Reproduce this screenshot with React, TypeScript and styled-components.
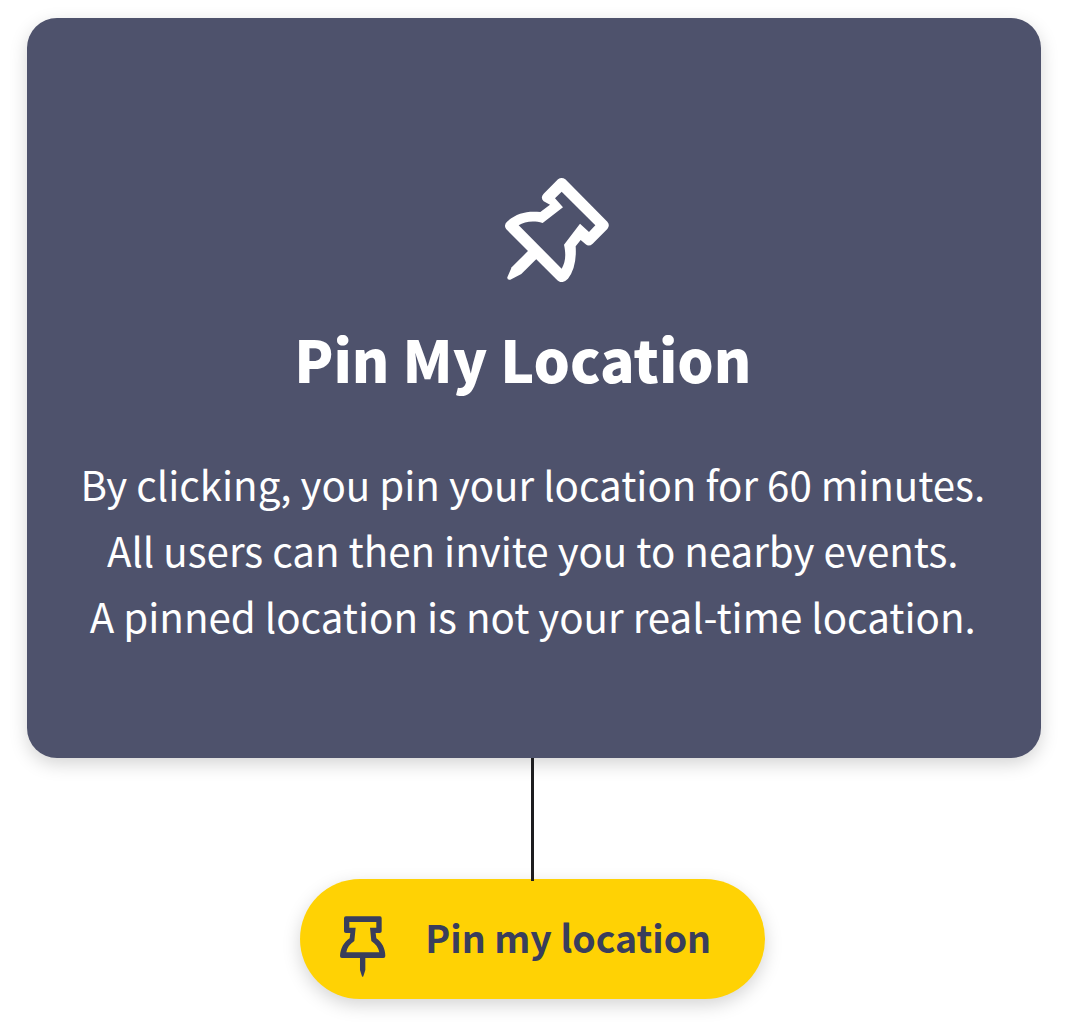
import React from 'react';
import styled, { createGlobalStyle } from 'styled-components';

const GlobalStyle = createGlobalStyle`
  * { box-sizing: border-box; }
  body { margin: 0; background: #fff; font-family: "Noto Sans CJK SC", sans-serif; }
`;
const Page = styled.main`
  width: 1068px; height: 1035px; padding: 18px 0 0 27px; overflow: hidden;
  display: flex; flex-direction: column; align-items: flex-start;
`;
const Card = styled.section`
  width: 1013.5px; height: 739.5px; border-radius: 30px; background: #4e526c; color: #fff;
  box-shadow: 0 6px 18px rgba(0,0,0,.17);
  display: flex; flex-direction: column; align-items: center; padding-top: 160px; flex: none;
`;
const CardPin = styled.svg`
  display: block; width: 104px; height: 104px; margin-left: 46px; fill: #fff; flex: none;
`;
const Title = styled.h1`
  margin: 28px 22px 0 0; font-size: 57.2px; line-height: 96px; font-weight: 900; white-space: nowrap;
`;
const Copy = styled.p`
  margin: 45px 2px 0 0; font-size: 40.28px; line-height: 66px; text-align: center; white-space: nowrap;
`;
const Connector = styled.div`
  width: 3px; height: 123px; margin: 0 0 -1.5px 504px; background: #1d1d1f; position: relative; z-index: 1; flex: none;
`;
const PinButton = styled.button`
  width: 465px; height: 120px; margin-left: 273px; border: 0; border-radius: 60px; background: #ffd204;
  color: #393e5c; box-shadow: 0 6px 18px rgba(0,0,0,.17); display: flex; align-items: center;
  padding: 0 0 0 40px; gap: 39.6px; white-space: nowrap; flex: none;
`;
const ButtonLabel = styled.span`
  font: 700 37.5px/60px "Noto Sans CJK SC", sans-serif; margin-bottom: 5px;
`;
const ButtonPin = styled.svg`
  width: 45.67px; height: 61px; margin-top: 15px; fill: currentColor; flex: none;
`;

export default function App() {
  return (
    <>
      <GlobalStyle />
      <Page>
        <Card>
          <CardPin viewBox="45 39 312 312" fillRule="evenodd">
            <path d="M204 43Q215 35 226 43L352 170Q361 181 352 192L308 236Q297 246 287 238L272 225L257 244Q261 306 234 341Q216 359 202 346L49 193Q40 181 51 170C80 143 113 137 151 141L180 119L161 109Q150 98 161 86ZM215 80L195 100L219 127L158 174C128 165 103 171 86 181L215 311C226 292 229 271 222 239L270 176L297 201L316 181Z" />
            <path d="M116 256L65 307L52 337Q51 346 61 344L94 327L140 281Z" />
          </CardPin>
          <Title>Pin My Location</Title>
          <Copy>By clicking, you pin your location for 60 minutes.<br />All users can then invite you to nearby events.<br />A pinned location is not your real-time location.</Copy>
        </Card>
        <Connector />
        <PinButton type="button">
          <ButtonPin viewBox="30 33 137 183" fillRule="evenodd">
            <path d="M48 34H150Q155 34 155 40V79Q155 84 149 84H137L139 100C155 111 166 130 166 153Q166 159 160 159H36Q30 159 30 153C31 130 42 111 59 100L61 84H48Q42 84 42 79V40Q42 34 48 34ZM58 51V68H77L73 108C59 117 51 128 49 142H148C145 128 138 117 124 108L120 68H139V51Z" />
            <path d="M90 157H106V195L100 214Q98 217 96 214L90 195Z" />
          </ButtonPin>
          <ButtonLabel>Pin my location</ButtonLabel>
        </PinButton>
      </Page>
    </>
  );
}
